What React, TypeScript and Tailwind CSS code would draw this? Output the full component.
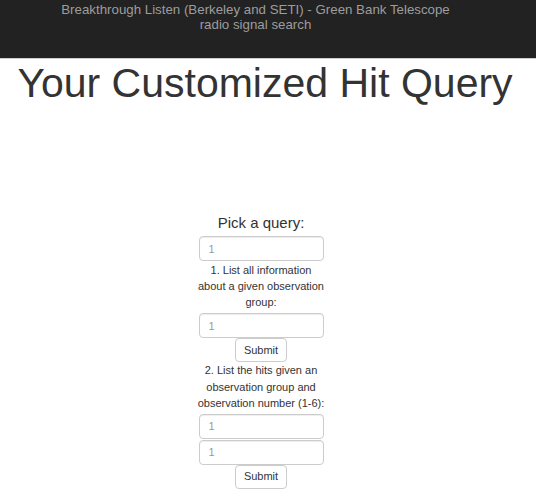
import React from "react";

function Field() {
  return (
    <input
      type="text"
      placeholder="1"
      className="block w-[125px] h-[25px] rounded-[4px] border border-[#ccc] bg-white px-[9px] text-[11px] text-[#555] placeholder:text-[#999] shadow-[inset_0_1px_1px_rgba(0,0,0,0.075)] outline-none"
    />
  );
}

function SubmitBtn() {
  return (
    <button className="block w-[52px] h-[24px] rounded-[4px] border border-[#ccc] bg-white text-[11px] text-[#333] leading-none">
      Submit
    </button>
  );
}

export default function App() {
  return (
    <div className="w-[536px] min-h-[495px] bg-white font-['Liberation_Sans',Arial,sans-serif] text-[#333]">
      <header className="h-[59px] bg-[#222] border-b border-[#d0d0d0] pt-[2px] pr-[25px] text-center text-[13.3px] leading-[15px] text-[#9d9d9d]">
        <div>Breakthrough Listen (Berkeley and SETI) - Green Bank Telescope</div>
        <div>radio signal search</div>
      </header>
      <h1 className="mt-[0px] pr-[6px] text-center text-[41px] leading-[48px] font-normal text-[#333] whitespace-nowrap">
        Your Customized Hit Query
      </h1>
      <div className="mt-[106px] pr-[14px] flex flex-col items-center">
        <div className="text-[15px] leading-[20px] text-[#333]">Pick a query:</div>
        <div className="mt-[3px]">
          <Field />
        </div>
        <p className="w-[127px] mt-[1px] text-center text-[11px] leading-[16px] text-[#333]">
          1. List all information about a given observation group:
        </p>
        <div className="mt-[3px]">
          <Field />
        </div>
        <SubmitBtn />
        <p className="w-[128px] mt-[0px] text-center text-[11px] leading-[16.5px] text-[#333]">
          2. List the hits given an observation group and observation number (1-6):
        </p>
        <div className="mt-[2px] flex flex-col gap-[1px]">
          <Field />
          <Field />
        </div>
        <SubmitBtn />
      </div>
    </div>
  );
}
